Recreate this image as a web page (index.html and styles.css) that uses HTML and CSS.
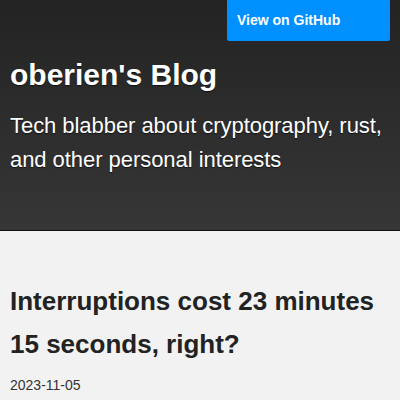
FILE: index.html
```html
<!DOCTYPE html>
<html>
<head>
<meta charset="utf-8">
<link rel="stylesheet" href="styles.css">
</head>
<body>
<header class="header">
  <div class="topbar">
    <a class="gh-button" href="#">View on GitHub</a>
  </div>
  <h1 class="site-title">oberien's Blog</h1>
  <h2 class="tagline">Tech blabber about cryptography, rust, and other personal interests</h2>
</header>
<main class="content">
  <h1 class="post-title">Interruptions cost 23 minutes 15 seconds, right?</h1>
  <p class="post-date">2023-11-05</p>
</main>
</body>
</html>
```
FILE: styles.css
```css
html, body {
  margin: 0;
  padding: 0;
}
body {
  background: #f2f2f2;
  font-family: "Liberation Sans", Arial, sans-serif;
  color: #222;
}
.header {
  background: linear-gradient(to bottom, #232323 0%, #363636 100%);
  border-bottom: 1px solid #111;
  padding: 0 10px;
  height: 230px;
  box-sizing: content-box;
  display: flex;
  flex-direction: column;
}
.topbar {
  display: flex;
  justify-content: flex-end;
}
.gh-button {
  display: block;
  width: 163px;
  height: 41px;
  box-sizing: border-box;
  padding: 12px 10px 0;
  background: #0090ff;
  color: #fff;
  font-weight: bold;
  font-size: 14px;
  text-decoration: none;
  border-radius: 0 0 2px 2px;
  line-height: 16px;
}
.site-title {
  margin: 16px 0 0;
  color: #fff;
  font-size: 30px;
  line-height: 36px;
  font-weight: bold;
  text-shadow: 0 1px 1px rgba(0,0,0,0.6);
}
.tagline {
  margin: 16px 0 0;
  color: #fff;
  font-size: 22px;
  font-weight: normal;
  letter-spacing: -0.05px;
  line-height: 34px;
  text-shadow: 0 1px 1px rgba(0,0,0,0.6);
}
.content {
  padding: 0 10px;
}
.post-title {
  margin: 49px 0 0;
  font-size: 26px;
  line-height: 43px;
  font-weight: bold;
  color: #222;
}
.post-date {
  margin: 11px 0 0;
  font-size: 14px;
  color: #333;
}
```
